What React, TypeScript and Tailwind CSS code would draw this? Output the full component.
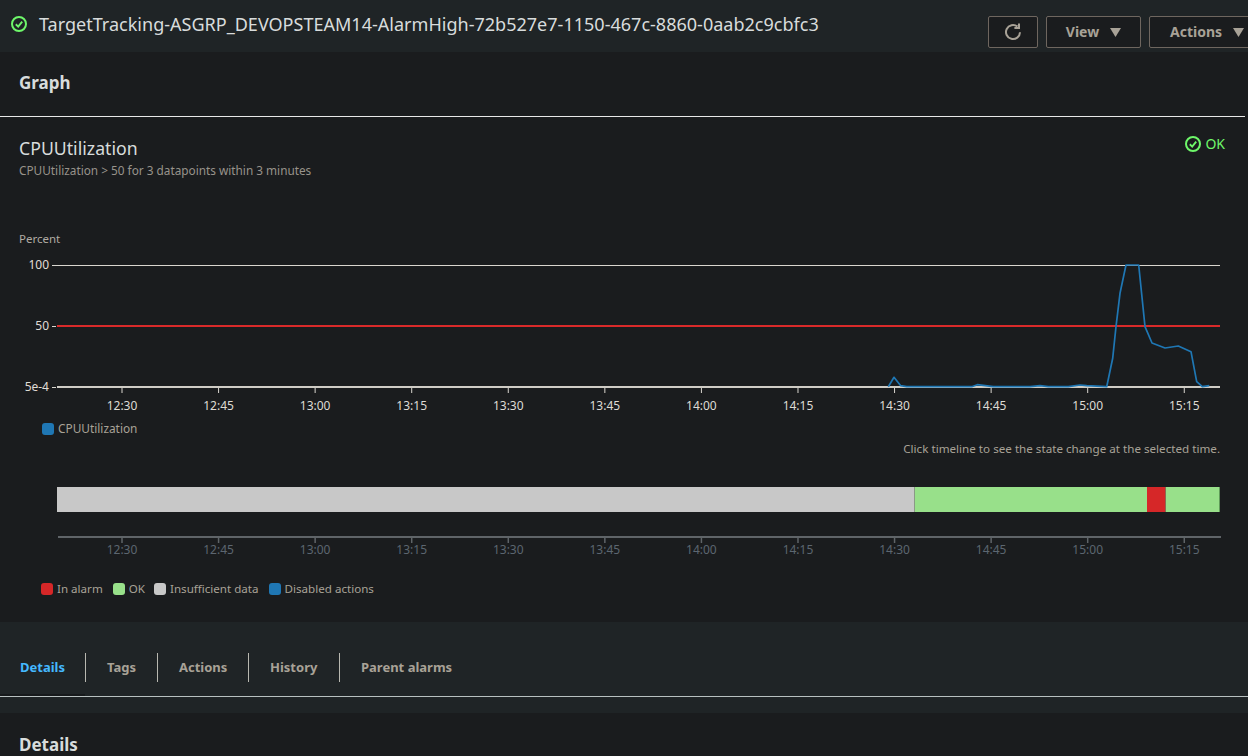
import React from "react";

const TICKS = ["12:30","12:45","13:00","13:15","13:30","13:45","14:00","14:15","14:30","14:45","15:00","15:15"];
const tickX = (i: number) => 122 + i * 96.57;
const LINE = "888.3,386.7 894,377.3 900.7,385.7 906.7,386.7 971.7,386.7 977.3,384.7 993.3,386.7 1030,386.7 1040,385.7 1048.3,386.7 1068.3,386.7 1080,385 1086.7,385.7 1106.7,386.7 1112.7,358.3 1116,326.7 1120,293.3 1126,265 1138.7,265 1145,326.7 1152,343 1165,348 1178.3,346 1191,351.7 1196.7,381.7 1202.3,386.7 1209.3,385.7";

function CheckCircle({ size }: { size: number }) {
  return (
    <svg width={size} height={size} viewBox="0 0 16 16" fill="none" stroke="#6ef76a" strokeWidth="2">
      <circle cx="8" cy="8" r="7" />
      <path d="M4.8 8.3 L7.2 10.6 L11.2 5.6" strokeWidth="1.9" />
    </svg>
  );
}

function Caret() {
  return (
    <svg width="11" height="9" viewBox="0 0 11 9"><path d="M0 0 H11 L5.5 9 Z" fill="#a8a297" /></svg>
  );
}

function Swatch({ color }: { color: string }) {
  return <span className="w-3 h-3 rounded-[3px] shrink-0" style={{ background: color }} />;
}

function MainChart() {
  return (
    <svg width="1248" height="188" viewBox="0 228 1248 188" className="block" fontFamily="'Noto Sans', sans-serif">
      <text x="19" y="243" fontSize="11.5" fill="#b0aba3">Percent</text>
      <text x="49" y="269" fontSize="12" fill="#e0ddd6" textAnchor="end">100</text>
      <text x="49" y="330" fontSize="12" fill="#e0ddd6" textAnchor="end">50</text>
      <text x="49" y="391" fontSize="12" fill="#e0ddd6" textAnchor="end">5e-4</text>
      <line x1="52" x2="1220" y1="265.5" y2="265.5" stroke="#d9d6cf" strokeWidth="1" />
      <line x1="52" x2="56" y1="326.5" y2="326.5" stroke="#d9d6cf" strokeWidth="1" />
      <line x1="57" x2="1220" y1="326" y2="326" stroke="#d92a2a" strokeWidth="2" />
      <line x1="52" x2="56" y1="387.5" y2="387.5" stroke="#d9d6cf" strokeWidth="1" />
      <line x1="57" x2="1220" y1="387" y2="387" stroke="#cfccc5" strokeWidth="2" />
      {TICKS.map((t, i) => (
        <g key={t}>
          <line x1={tickX(i)} x2={tickX(i)} y1="388" y2="393" stroke="#d9d6cf" strokeWidth="1" />
          <text x={tickX(i)} y="410" fontSize="12" fill="#dedbd4" textAnchor="middle">{t}</text>
        </g>
      ))}
      <polyline points={LINE} fill="none" stroke="#1f77b4" strokeWidth="1.7" strokeLinejoin="round" />
    </svg>
  );
}

function TimelineAxis() {
  return (
    <svg width="1248" height="30" viewBox="0 530 1248 30" className="block" fontFamily="'Noto Sans', sans-serif">
      <line x1="58" x2="1221" y1="537" y2="537" stroke="#5f6468" strokeWidth="2" />
      {TICKS.map((t, i) => (
        <g key={t}>
          <line x1={tickX(i)} x2={tickX(i)} y1="537" y2="543" stroke="#5f6468" strokeWidth="1.5" />
          <text x={tickX(i)} y="554" fontSize="12" fill="#5c6670" textAnchor="middle">{t}</text>
        </g>
      ))}
    </svg>
  );
}

const btn = "h-8 border border-[#6e665f] rounded-[2px] bg-[#1a1c1e] flex items-center justify-center text-[#a8a297] text-sm font-bold";
const tab = "h-[29px] pt-[1px] flex items-center border-r border-[#b8b8b0]";

export default function App() {
  return (
    <div className="h-[756px] w-[1248px] overflow-hidden bg-[#1f2426] text-[#d5dbdb]" style={{ fontFamily: "'Noto Sans', sans-serif" }}>
      <header className="h-[52px] flex items-start justify-between pl-[11px]">
        <div className="flex items-center gap-[12px] pt-[9px] h-[39px] whitespace-nowrap">
          <CheckCircle size={16} />
          <span className="text-[18.05px] leading-[28px] text-[#d8dcdc]">TargetTracking-ASGRP_DEVOPSTEAM14-AlarmHigh-72b527e7-1150-467c-8860-0aab2c9cbfc3</span>
        </div>
        <div className="flex gap-2 pt-4 w-[260px] shrink-0">
          <button className={`${btn} w-[50px] shrink-0`}>
            <svg width="18" height="18" viewBox="0 0 18 18" fill="none" stroke="#a8a297" strokeWidth="2">
              <path d="M16 9.2 A7 7 0 1 1 13.4 3.6" />
              <path d="M15 0.6 V5 H10.4" />
            </svg>
          </button>
          <button className={`${btn} w-[95px] shrink-0 gap-[11px]`}><span>View</span><Caret /></button>
          <button className={`${btn} w-[110px] shrink-0 justify-start pl-[20px] gap-[11px]`}><span>Actions</span><Caret /></button>
        </div>
      </header>

      <main className="bg-[#1a1c1e] h-[570px]">
        <div className="h-[65px] flex items-center pl-[19px] pb-[3px] border-b border-[#e8e8e8] mr-[3px]">
          <h2 className="text-[17px] font-bold text-[#d8dcdc]">Graph</h2>
        </div>

        <div className="flex justify-between pl-[19px] pr-[23px] pt-[18px] h-[111px]">
          <div>
            <div className="text-[17.7px] leading-[26px] text-[#d8dcdc]">CPUUtilization</div>
            <div className="text-[11.8px] leading-[18px] text-[#98938b]">CPUUtilization &gt; 50 for 3 datapoints within 3 minutes</div>
          </div>
          <div className="flex items-center gap-1 h-5 mt-[-1px] text-[#6ef76a] text-sm">
            <CheckCircle size={16} /><span>OK</span>
          </div>
        </div>

        <MainChart />

        <div className="flex items-center gap-1 pl-[42px] h-[14px] mt-[6px] text-[11.85px] text-[#a8a297]">
          <Swatch color="#1f77b4" /><span>CPUUtilization</span>
        </div>
        <div className="text-right pr-[28px] mt-[3px] leading-[20px] text-[11.65px] text-[#a8a297]">
          Click timeline to see the state change at the selected time.
        </div>

        <div className="flex ml-[57px] w-[1163px] h-[25px] mt-[28px]">
          <div className="w-[858px] bg-[#c8c8c8] border-r border-[#8a9a86]" />
          <div className="w-[232px] bg-[#98e08a]" />
          <div className="w-[19px] bg-[#d62728] border-r border-[#8a6a50]" />
          <div className="flex-1 bg-[#98e08a] border-r border-[#5f9a58]" />
        </div>

        <div className="mt-[18px]"><TimelineAxis /></div>

        <div className="flex items-center pl-[41px] mt-[22px] h-[14px] text-[11.6px] text-[#a8a297]">
          <Swatch color="#d62728" /><span className="ml-1 mr-[10px]">In alarm</span>
          <Swatch color="#98e08a" /><span className="ml-1 mr-[9px]">OK</span>
          <Swatch color="#c8c8c8" /><span className="ml-1 mr-[10px]">Insufficient data</span>
          <Swatch color="#1f77b4" /><span className="ml-1">Disabled actions</span>
        </div>
      </main>

      <nav className="h-[75px] pt-[31px] border-b border-[#b8c0c0] flex items-start text-[13px] font-bold text-[#a8a297]">
        <div className={`${tab} w-[86px] pl-[20px] text-[#44b9ff] relative`}>
          Details
          <span className="absolute left-0 right-0 top-[41px] h-[2px] bg-[#16191b]" />
        </div>
        <div className={`${tab} w-[72px] pl-[21px]`}>Tags</div>
        <div className={`${tab} w-[91px] pl-[21px]`}>Actions</div>
        <div className={`${tab} w-[91px] pl-[21px]`}>History</div>
        <div className="h-[29px] pt-[1px] flex items-center pl-[21px]">Parent alarms</div>
      </nav>

      <div className="h-4" />
      <section className="bg-[#1a1c1e] h-[60px] pl-[19px] pt-[19px]">
        <h2 className="text-[17px] leading-[26px] font-bold text-[#d8dcdc]">Details</h2>
      </section>
    </div>
  );
}
